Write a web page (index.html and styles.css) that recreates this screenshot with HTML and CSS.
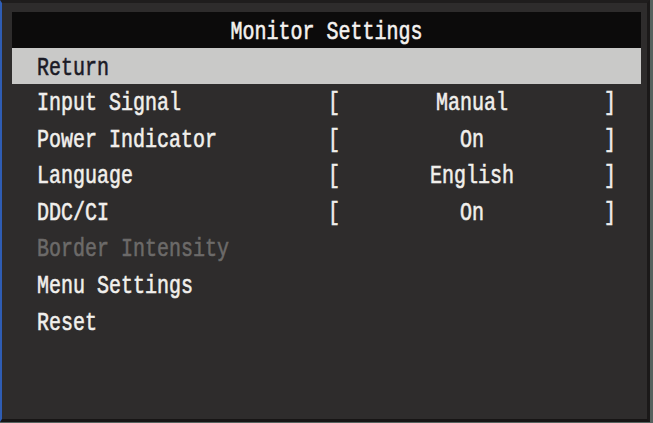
FILE: index.html
```html
<!DOCTYPE html>
<html lang="en">
<head>
<meta charset="utf-8">
<title>Monitor Settings</title>
<link rel="stylesheet" href="styles.css">
</head>
<body>
<div class="osd">
  <div class="title"><span class="txt">Monitor Settings</span></div>
  <ul class="menu">
    <li class="row selected"><span class="label"><span class="txt">Return</span></span></li>
    <li class="row"><span class="label"><span class="txt">Input Signal</span></span><span class="value"><span class="txt">[</span><span class="txt">Manual</span><span class="txt">]</span></span></li>
    <li class="row"><span class="label"><span class="txt">Power Indicator</span></span><span class="value"><span class="txt">[</span><span class="txt">On</span><span class="txt">]</span></span></li>
    <li class="row"><span class="label"><span class="txt">Language</span></span><span class="value"><span class="txt">[</span><span class="txt">English</span><span class="txt">]</span></span></li>
    <li class="row"><span class="label"><span class="txt">DDC/CI</span></span><span class="value"><span class="txt">[</span><span class="txt">On</span><span class="txt">]</span></span></li>
    <li class="row disabled"><span class="label"><span class="txt">Border Intensity</span></span></li>
    <li class="row"><span class="label"><span class="txt">Menu Settings</span></span></li>
    <li class="row"><span class="label"><span class="txt">Reset</span></span></li>
  </ul>
</div>
</body>
</html>
```

FILE: styles.css
```css
html, body {
  margin: 0;
  padding: 0;
}
body {
  width: 653px;
  height: 423px;
  background: #56625f;
  overflow: hidden;
  font-family: "Liberation Mono", "DejaVu Sans Mono", monospace;
  font-size: 20px;
  color: #f1efec;
}
.osd {
  width: 629px;
  height: 407px;
  padding: 9px 6px 0 10px;
  background: #2e2c2c;
  border-left: 2px solid #2f5db4;
  border-top: 3px solid #1f1d1d;
  border-right: 3px solid #1b1919;
  border-bottom: 3px solid #171515;
}
.txt {
  display: inline-block;
  transform: translateY(2px) scaleY(1.3);
  white-space: pre;
  -webkit-text-stroke: 0.45px currentColor;
}
.title {
  height: 36px;
  line-height: 36px;
  background: #0c0b0b;
  text-align: center;
  color: #f4f2ef;
}
.menu {
  list-style: none;
  margin: 0;
  padding: 0;
}
.row {
  display: grid;
  grid-template-columns: 291px 288px;
  height: 36.6px;
  line-height: 36.6px;
  padding-left: 25px;
}
.row.selected {
  height: 36px;
  line-height: 36px;
  background: #c9c9c8;
  color: #1b1b26;
}
.row.disabled {
  color: #6c6a69;
}
.value {
  display: flex;
  justify-content: space-between;
}
```
